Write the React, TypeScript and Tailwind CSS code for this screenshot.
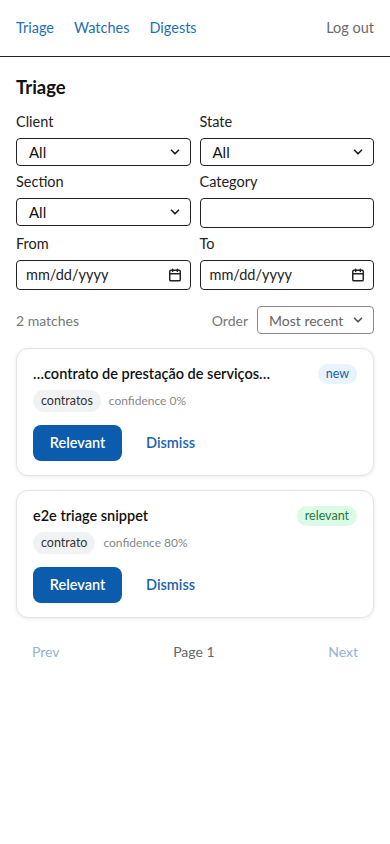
import { ChevronDown, Calendar } from "lucide-react";

const font = { fontFamily: 'Lato, "Noto Sans", sans-serif' };

const SelectBox = ({ value, muted }: { value: string; muted?: boolean }) => (
  <div className={`flex h-[28px] items-center justify-between rounded-[4px] border pr-2 ${muted ? "border-[#8a8a8a] pl-[11px] text-[#666]" : "border-[#222] pl-3 text-[#111]"}`}>
    <span className={`whitespace-nowrap ${muted ? "text-[14px]" : "text-[15px]"}`}>{value}</span>
    <ChevronDown className={`h-[14px] w-[14px] shrink-0 ${muted ? "text-[#555]" : "text-[#222]"}`} strokeWidth={3} />
  </div>
);

const DateBox = () => (
  <div className="flex h-[30px] items-center justify-between rounded-[4px] border border-[#222] pl-[9px] pr-2 text-[#222]">
    <span className="text-[14.5px]">mm/dd/yyyy</span>
    <Calendar className="h-[14px] w-[14px]" strokeWidth={2.5} />
  </div>
);

const Card = ({ title, badge, badgeClass, tag, confidence }: { title: string; badge: string; badgeClass: string; tag: string; confidence: string }) => (
  <div className="rounded-xl border border-[#e3e3e3] bg-white px-[16px] pb-[14px] pt-[15px] shadow-[0_1px_4px_rgba(0,0,0,0.08)]">
    <div className="flex h-[20px] items-center justify-between">
      <span className="text-[14.5px] font-semibold text-[#111]">{title}</span>
      <span className={`flex h-[20px] items-center rounded-full px-2 text-[12.5px] ${badgeClass}`}>{badge}</span>
    </div>
    <div className="mt-[6px] flex items-center gap-2">
      <span className="flex h-[22px] items-center rounded-full bg-[#f1f2f4] px-2 text-[12.5px] text-[#333]">{tag}</span>
      <span className="text-[12px] text-[#888]">{confidence}</span>
    </div>
    <div className="mt-[13px] flex items-center gap-6">
      <button className="h-[36px] w-[89px] rounded-lg bg-[#0b5cad] text-[14.5px] font-semibold text-white">Relevant</button>
      <button className="text-[14.5px] font-semibold text-[#1a63ad]">Dismiss</button>
    </div>
  </div>
);

const App = () => {
  return <div className="min-h-[844px] bg-white" style={font}>
      <nav className="flex h-[57px] items-center justify-between border-b border-[#222] px-4 text-[14.5px]">
        <div className="flex gap-5 text-[#1f6fb5]">
          <span>Triage</span>
          <span>Watches</span>
          <span>Digests</span>
        </div>
        <span className="text-[#6b6b6b]">Log out</span>
      </nav>

      <main className="px-4 pt-[18px]">
        <h1 className="text-[18.5px] font-bold leading-[24px] text-[#111]">Triage</h1>

        <div className="mt-[13px] grid grid-cols-2 gap-x-[9px] gap-y-[6px] text-[14.5px] leading-[20px] text-[#222]">
          <div>
            <div className="mb-[6px]">Client</div>
            <SelectBox value="All" />
          </div>
          <div>
            <div className="mb-[6px]">State</div>
            <SelectBox value="All" />
          </div>
          <div>
            <div className="mb-[6px]">Section</div>
            <SelectBox value="All" />
          </div>
          <div>
            <div className="mb-[6px]">Category</div>
            <div className="h-[30px] rounded-[4px] border border-[#222]" />
          </div>
          <div>
            <div className="mb-[6px]">From</div>
            <DateBox />
          </div>
          <div>
            <div className="mb-[6px]">To</div>
            <DateBox />
          </div>
        </div>

        <div className="mt-[16px] flex items-center justify-between">
          <span className="text-[14px] text-[#777]">2 matches</span>
          <div className="flex items-center gap-[9px]">
            <span className="text-[14px] text-[#777]">Order</span>
            <div className="w-[117px]">
              <SelectBox value="Most recent" muted />
            </div>
          </div>
        </div>

        <div className="mt-[14px] flex flex-col gap-[14px]">
          <Card title="…contrato de prestação de serviços…" badge="new" badgeClass="bg-[#e8f3fd] text-[#1a5fa8]" tag="contratos" confidence="confidence 0%" />
          <Card title="e2e triage snippet" badge="relevant" badgeClass="bg-[#dcfbe6] text-[#1f7a3e]" tag="contrato" confidence="confidence 80%" />
        </div>

        <div className="mt-[24px] flex items-center justify-between px-4 text-[14px] leading-[20px]">
          <span className="text-[#8fb3d8]">Prev</span>
          <span className="text-[#666]">Page 1</span>
          <span className="text-[#8fb3d8]">Next</span>
        </div>
      </main>
    </div>;
};

export default App;
